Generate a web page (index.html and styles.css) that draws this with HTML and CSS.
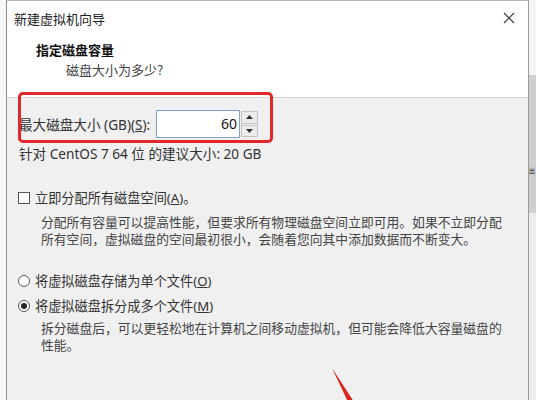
FILE: index.html
```html
<!DOCTYPE html>
<html lang="zh-CN">
<head>
<meta charset="utf-8">
<title>新建虚拟机向导</title>
<link rel="stylesheet" href="styles.css">
</head>
<body>
<div class="screen">
  <div class="gap-left"></div>
  <div class="dialog">
    <div class="head">
      <div class="titlebar">
        <span class="title">新建虚拟机向导</span>
        <svg class="close" width="12" height="12" viewBox="0 0 12 12"><path d="M1 1 L11 11 M11 1 L1 11" stroke="#333" stroke-width="1.1" fill="none"/></svg>
      </div>
      <div class="step-title">指定磁盘容量</div>
      <div class="step-sub">磁盘大小为多少?</div>
    </div>
    <div class="body">
      <div class="size-row">
        <span class="label">最大磁盘大小 (GB)(<u>S</u>):</span>
        <div class="spin">
          <div class="spin-input">60</div>
          <div class="spin-btns">
            <div class="spin-btn"><svg width="7" height="4" viewBox="0 0 7 4"><path d="M0 4 L3.5 0 L7 4 Z" fill="#333"/></svg></div>
            <div class="spin-btn"><svg width="7" height="4" viewBox="0 0 7 4"><path d="M0 0 L3.5 4 L7 0 Z" fill="#333"/></svg></div>
          </div>
        </div>
      </div>
      <div class="recommend">针对 CentOS 7 64 位 的建议大小: 20 GB</div>
      <div class="option check-row"><span class="checkbox"></span><span>立即分配所有磁盘空间(<u>A</u>)。</span></div>
      <p class="desc first">分配所有容量可以提高性能，但要求所有物理磁盘空间立即可用。如果不立即分配所有空间，虚拟磁盘的空间最初很小，会随着您向其中添加数据而不断变大。</p>
      <div class="option radio-row r1"><span class="radio"></span><span>将虚拟磁盘存储为单个文件(<u>O</u>)</span></div>
      <div class="option radio-row r2"><span class="radio checked"></span><span>将虚拟磁盘拆分成多个文件(<u>M</u>)</span></div>
      <p class="desc second">拆分磁盘后，可以更轻松地在计算机之间移动虚拟机，但可能会降低大容量磁盘的性能。</p>
    </div>
  </div>
  <div class="right-strip">
    <div class="strip-top"></div>
    <div class="strip-mid"><span class="strip-glyph">出</span></div>
    <div class="strip-bottom"></div>
  </div>
  <div class="highlight"></div>
  <svg class="arrow" width="40" height="40" viewBox="0 0 40 40"><path d="M0 0 L22 34 L17 36 Z" fill="#d9231c"/><path d="M14 26 L26 40 L18 40 Z" fill="#d9231c"/></svg>
</div>
</body>
</html>
```

FILE: styles.css
```css
html, body {
  margin: 0;
  padding: 0;
}
body {
  width: 536px;
  height: 400px;
  overflow: hidden;
  background: #f6f6f6;
  font-family: "Noto Sans", "Noto Sans CJK SC", sans-serif;
  font-size: 12.8px;
  color: #222;
}
.screen {
  position: relative;
  display: flex;
  width: 536px;
  height: 400px;
}
.gap-left {
  width: 6px;
  flex: none;
  background: #f7f7f7;
}
.dialog {
  width: 521px;
  flex: none;
  border-left: 1px solid #8d8d8d;
  border-right: 1px solid #9a9a9a;
  border-top: 1px solid #b5b5b5;
  background: #f0f0f0;
  display: flex;
  flex-direction: column;
}
.head {
  background: #ffffff;
  height: 96px;
  border-bottom: 1px solid #d6d6d6;
  display: flex;
  flex-direction: column;
}
.titlebar {
  height: 34px;
  display: flex;
  align-items: center;
  justify-content: space-between;
  padding: 0 13px 0 7px;
}
.title {
  font-family: "Noto Sans CJK SC", sans-serif;
  font-size: 13px;
  color: #222;
}
.step-title {
  margin: 6px 0 0 29px;
  font-family: "Noto Sans CJK SC", sans-serif;
  font-weight: bold;
  font-size: 13px;
  line-height: 18px;
  color: #111;
}
.step-sub {
  margin: 2px 0 0 59px;
  font-family: "Noto Sans CJK SC", sans-serif;
  font-size: 13px;
  line-height: 18px;
  color: #444;
}
.body {
  padding: 0 0 0 12px;
  display: flex;
  flex-direction: column;
}
.size-row {
  margin-top: 12px;
  height: 28px;
  display: flex;
  align-items: center;
}
.label {
  width: 137px;
  flex: none;
  font-size: 13.6px;
  color: #333;
}
.spin {
  display: flex;
  height: 28px;
}
.spin-input {
  width: 80px;
  height: 26px;
  border: 1px solid #7da2ce;
  background: #fff;
  text-align: right;
  padding-right: 2px;
  line-height: 26px;
  font-size: 14px;
  color: #111;
}
.spin-btns {
  display: flex;
  flex-direction: column;
  gap: 1px;
  padding: 1px 0 1px 1px;
}
.spin-btn {
  width: 15px;
  height: 12px;
  background: #ececec;
  border: 1px solid #c4c4c4;
  display: flex;
  align-items: center;
  justify-content: center;
}
.recommend {
  margin-top: 7px;
  line-height: 18px;
  font-size: 13.6px;
  color: #333;
}
.option {
  display: flex;
  align-items: center;
  gap: 5px;
  line-height: 18px;
  font-size: 13.2px;
  color: #333;
  margin-left: -1px;
}
.check-row {
  margin-top: 26px;
}
.checkbox {
  width: 10px;
  height: 10px;
  border: 1px solid #555;
  background: #fff;
  flex: none;
}
.radio {
  width: 10px;
  height: 10px;
  border: 1px solid #555;
  border-radius: 50%;
  background: #fff;
  flex: none;
  display: flex;
  align-items: center;
  justify-content: center;
}
.radio.checked::after {
  content: "";
  width: 6px;
  height: 6px;
  border-radius: 50%;
  background: #222;
}
.desc {
  margin: 0;
  padding-left: 22px;
  padding-right: 18px;
  line-height: 17px;
  color: #444;
}
.desc.first {
  margin-top: 7px;
}
.r1 {
  margin-top: 24px;
}
.r2 {
  margin-top: 7px;
}
.desc.second {
  margin-top: 5px;
}
.right-strip {
  flex: 1;
  display: flex;
  flex-direction: column;
}
.strip-top {
  height: 75px;
  background: #f4f4f4;
}
.strip-mid {
  height: 138px;
  background: #cfcfcf;
  position: relative;
  overflow: hidden;
}
.strip-glyph {
  position: absolute;
  left: 0;
  top: 92px;
  font-family: "Noto Sans CJK SC", sans-serif;
  font-size: 6px;
  line-height: 7px;
  color: #222;
}
.strip-bottom {
  flex: 1;
  background: #ececec;
}
.highlight {
  position: absolute;
  left: 18px;
  top: 92px;
  width: 249px;
  height: 45px;
  border: 3px solid #e3262b;
  border-radius: 5px;
}
.arrow {
  position: absolute;
  left: 332px;
  top: 368px;
}
```
